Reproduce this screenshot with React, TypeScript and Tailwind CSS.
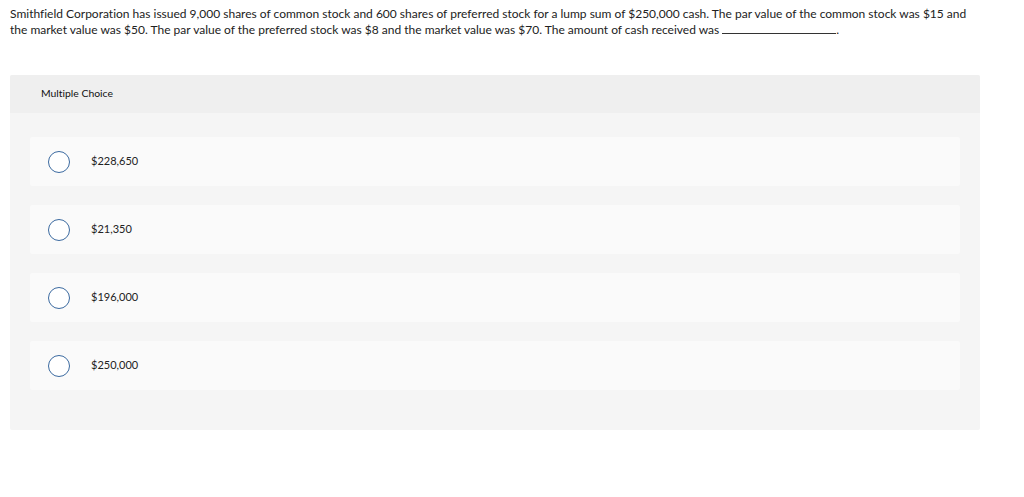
const options = ['$228,650', '$21,350', '$196,000', '$250,000']

export default function App() {
  return (
    <div
      className="min-h-[497px] bg-white pt-[6px] text-[#222] [font-variant-ligatures:none]"
      style={{ fontFamily: 'Lato, "Open Sans", sans-serif' }}
    >
      <p className="px-[10px] text-[12px] leading-[16px]">
        Smithfield Corporation has issued 9,000 shares of common stock and 600 shares of preferred stock for a lump sum of
        $250,000 cash. The par value of the common stock was $15 and
        <br />
        the market value was $50. The par value of the preferred stock was $8 and the market value was $70. The amount of
        cash received was{' '}
        <span className="inline-block w-[114px] border-b border-[#333] align-baseline" />.
      </p>

      <div className="ml-[10px] mt-[37px] w-[970px] rounded-[2px] bg-[#f5f5f5] pb-[40px]">
        <div className="flex h-[38px] items-center rounded-t-[2px] bg-[#efefef] pl-[31px] text-[10.4px] text-[#111]">
          Multiple Choice
        </div>
        <div className="flex flex-col gap-[19px] px-[20px] pt-[24px]">
          {options.map((o) => (
            <div key={o} className="flex h-[49px] items-center rounded-[2px] bg-[#fafafa]">
              <span className="ml-[18px] h-[22px] w-[22px] shrink-0 rounded-full border border-[#3b6aa0] bg-white" />
              <span className="ml-[21px] text-[11px] text-[#222]">{o}</span>
            </div>
          ))}
        </div>
      </div>
    </div>
  )
}
